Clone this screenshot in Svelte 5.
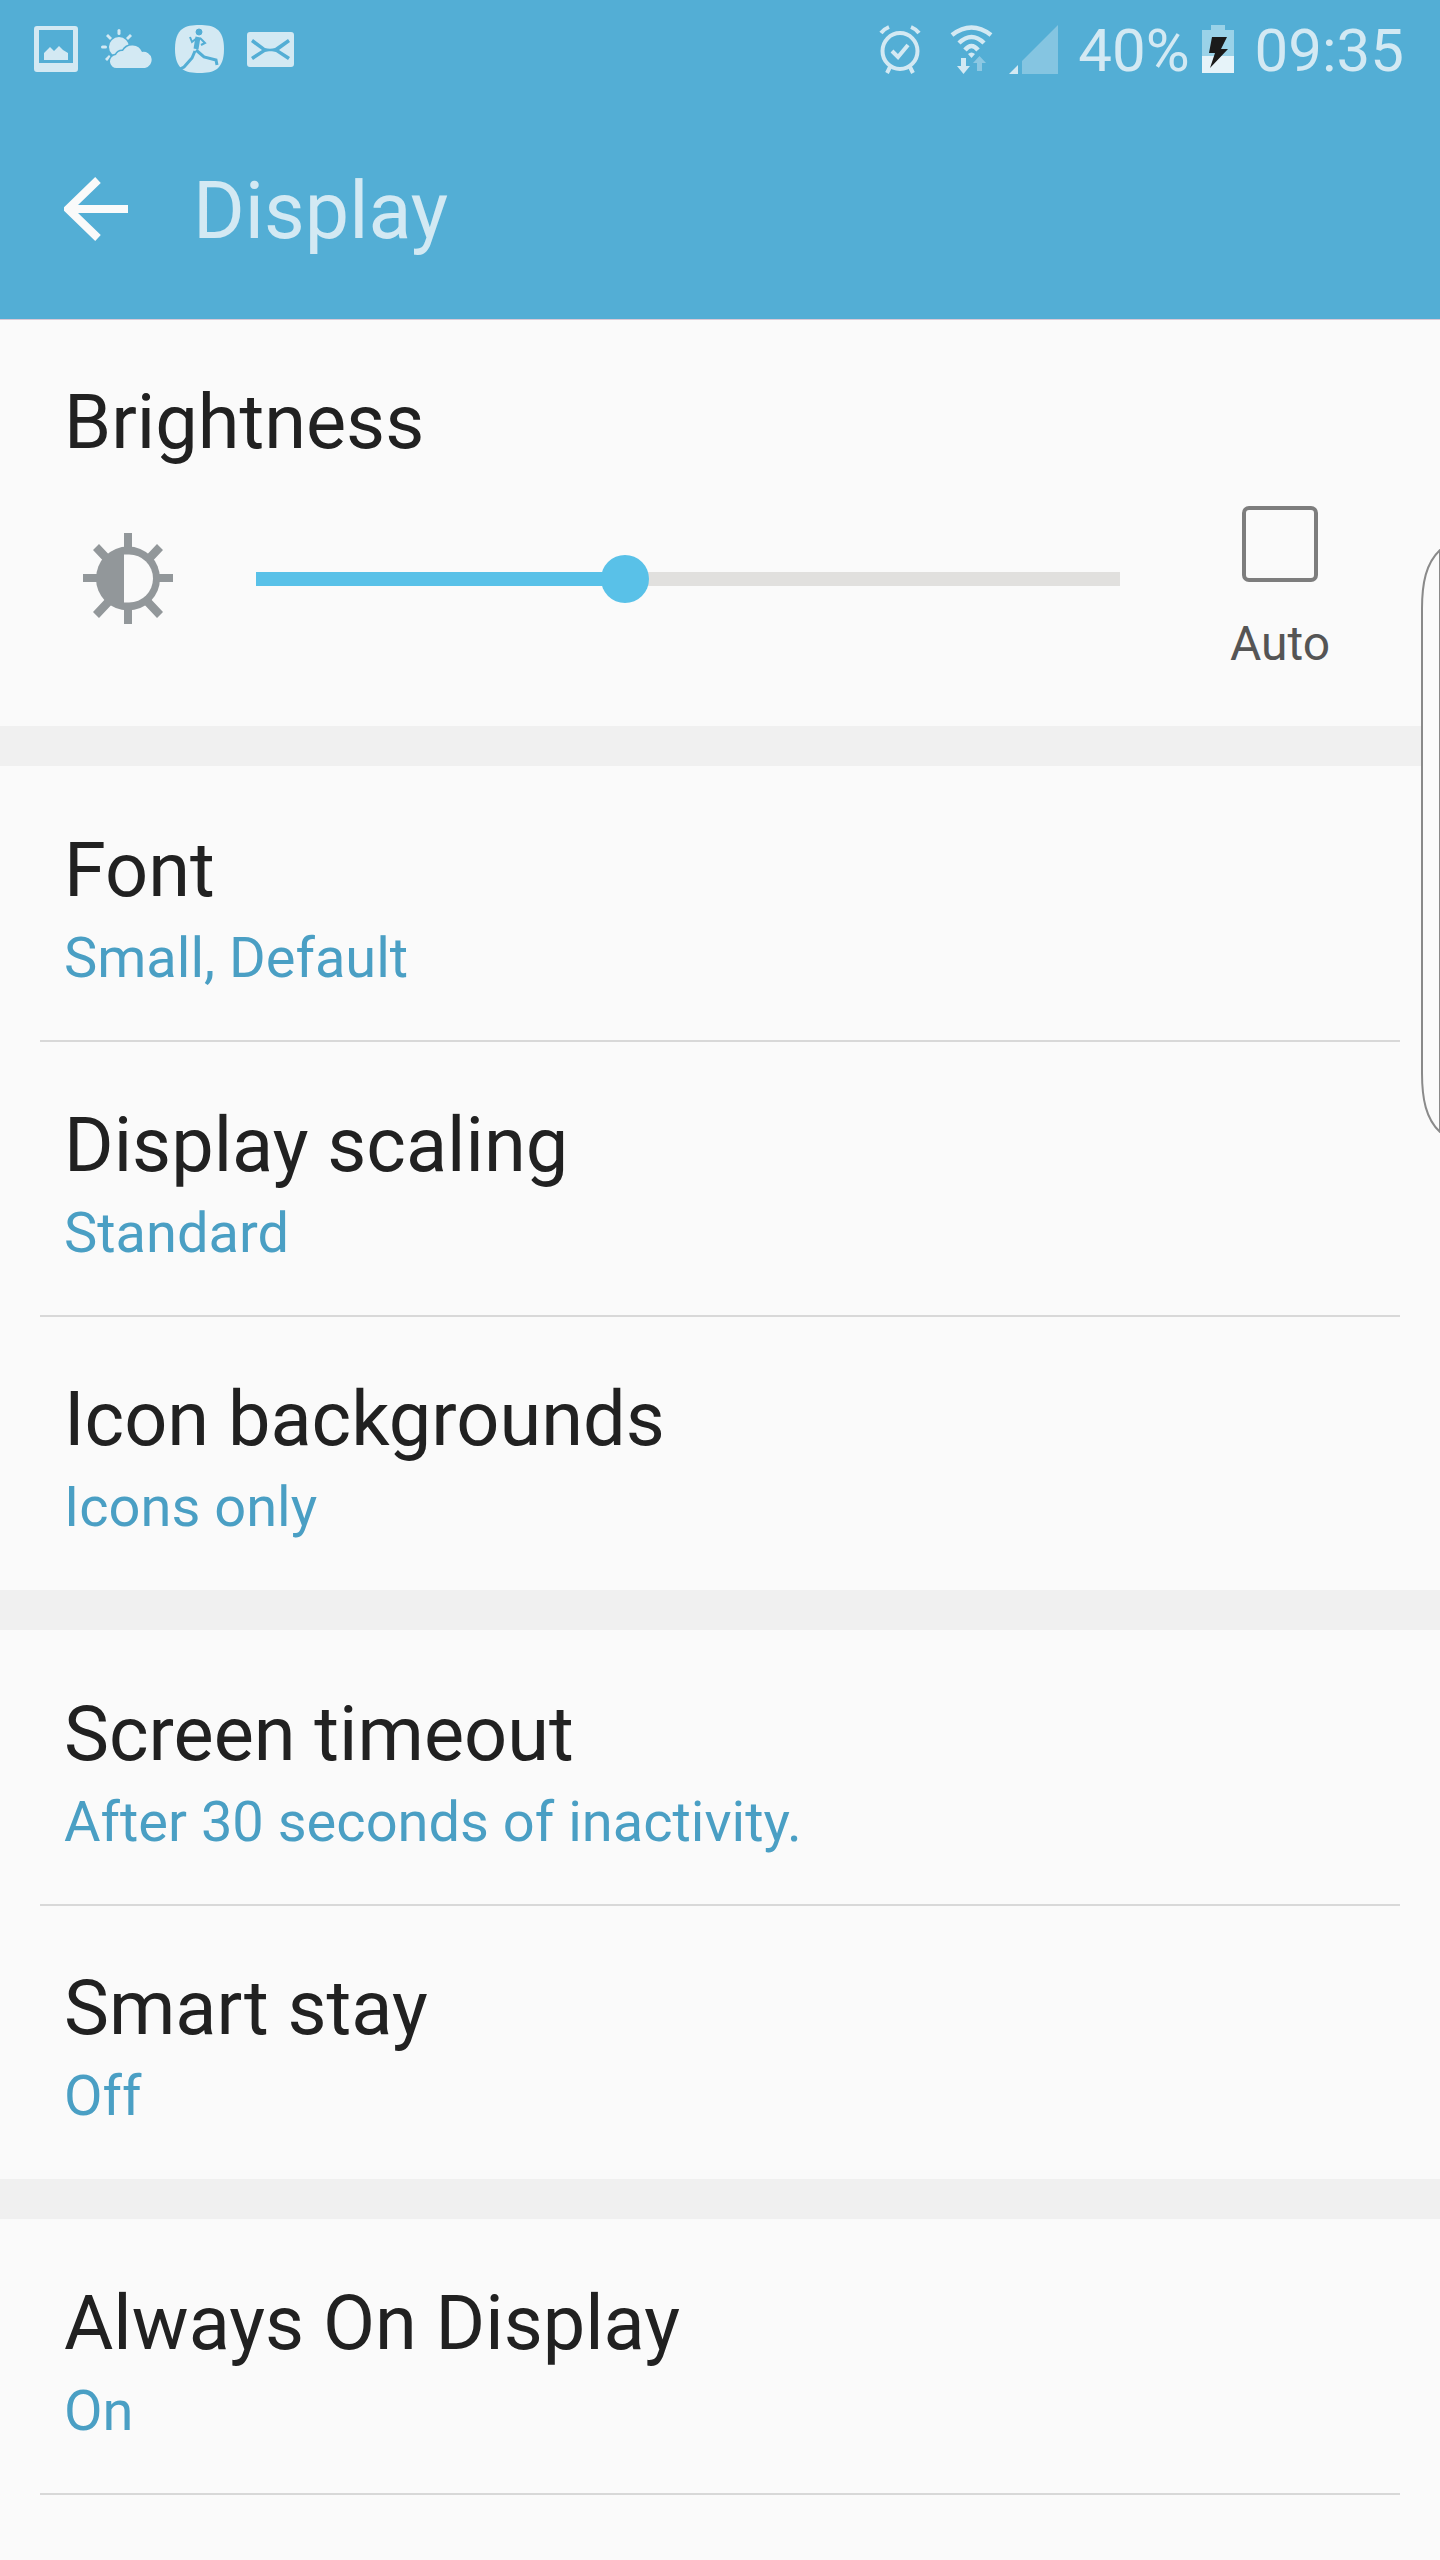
<script>
  const brightness = 42.7;

  const groups = [
    [
      { title: 'Font', sub: 'Small, Default' },
      { title: 'Display scaling', sub: 'Standard' },
      { title: 'Icon backgrounds', sub: 'Icons only' }
    ],
    [
      { title: 'Screen timeout', sub: 'After 30 seconds of inactivity.' },
      { title: 'Smart stay', sub: 'Off' }
    ],
    [
      { title: 'Always On Display', sub: 'On' }
    ]
  ];
</script>

<div class="screen">
  <header class="appbar">
    <div class="status">
      <div class="notif">
        <svg width="44" height="46" viewBox="0 0 44 46">
          <path fill-rule="evenodd" d="M3 0h38a3 3 0 0 1 3 3v40a3 3 0 0 1-3 3H3a3 3 0 0 1-3-3V3a3 3 0 0 1 3-3zM5 4v33h34V4z" />
          <path d="M10 34v-7l6-6 4 4 5-5 4 4 5 3v7z" />
        </svg>
        <svg width="51" height="40" viewBox="0 0 51 40">
          <circle cx="18" cy="18" r="10" />
          <rect x="16.500" y="0" width="3" height="6" rx="1.500" />
          <rect x="0" y="16.500" width="6" height="3" rx="1.500" />
          <path d="M5 7l2-2 4 4-2 2zM31 7l-2-2-4 4 2 2zM4 30l4-4 2 2-4 4z" />
          <path class="cloud" d="M16 39a6.500 6.500 0 0 1-1-13 7 7 0 0 1 7-4 10.500 10.500 0 0 1 19 1 8 8 0 0 1 3 16z" />
        </svg>
        <svg width="49" height="48" viewBox="0 0 49 48">
          <path d="M24.500 0c14 0 24.500 3 24.500 24S38.500 48 24.500 48 0 45 0 24 10.500 0 24.500 0z" />
          <g class="runner">
            <circle cx="24" cy="7" r="3" />
            <path d="M23 12l-2 12" stroke-width="5" />
            <path d="M21 25l8 7 12 3 1 5M20 26l-3 7-8 9-4 2" stroke-width="3" />
            <path d="M22 13l-5 4-2-5M25 13l5 5-4 2" stroke-width="2" />
          </g>
        </svg>
        <svg width="47" height="35" viewBox="0 0 47 35">
          <path fill-rule="evenodd" d="M3 0h41a3 3 0 0 1 3 3v29a3 3 0 0 1-3 3H3a3 3 0 0 1-3-3V3a3 3 0 0 1 3-3zM6 7l-2 3 11 8-11 7 2 3 12-8c3-1 8-1 11 0l12 8 2-3-11-7 11-8-2-3-13 9c-3 1-7 1-10 0z" />
        </svg>
      </div>
      <div class="system">
        <svg class="alarm" width="42" height="49" viewBox="0 0 42 49">
          <ellipse cx="21" cy="26" rx="17.500" ry="18" fill="none" stroke-width="4" />
          <path d="M13 26l6 6 10-12" fill="none" stroke-width="4" />
          <path d="M2 8q3-4 8-6M40 8q-3-4-8-6M11 42l-3 6M31 42l3 6" fill="none" stroke-width="4" />
        </svg>
        <svg class="wifi" width="43" height="49" viewBox="0 0 43 49">
          <path d="M2 10Q21.500-5 41 10M9 18Q21.500 6 34 18M15 25Q21.500 17 28 25" fill="none" stroke-width="4.500" />
          <path d="M21.500 33L18 29q3.500-3 7 0z" />
          <path d="M11 33h5v8h4l-6.500 8L7 41h4z" />
          <path d="M29.500 31l6.500 7h-4v8h-5v-8h-4z" opacity=".45" />
        </svg>
        <svg class="signal" width="49" height="49" viewBox="0 0 49 49">
          <path d="M0 49l9-9v9z" />
          <path d="M13 36L49 0v49H13z" opacity=".4" />
        </svg>
        <span class="pct">40%</span>
        <svg class="battery" width="32" height="48" viewBox="0 0 32 48">
          <path d="M9 0h14v5h9v26H0V5h9z" fill="#9ad2e8" />
          <path d="M0 31h32v17H0z" fill="#e6f3f9" />
          <path d="M10 12h15l-6 12h7L8 43l5-15H7z" fill="#1a1a1a" />
        </svg>
        <span class="clock">09:35</span>
      </div>
    </div>
    <div class="toolbar">
      <svg class="back" width="64" height="64" viewBox="0 0 64 64">
        <path d="M64 32H4M34 3L4 32l30 29" fill="none" stroke="#fafafa" stroke-width="8" />
      </svg>
      <h1>Display</h1>
    </div>
  </header>

  <section class="brightness">
    <div class="title">Brightness</div>
    <div class="controls">
      <svg class="sun" width="90" height="91" viewBox="0 0 90 91">
        <path d="M41 0h8v91h-8zM0 41h90v8H0z" fill="#92979a" />
        <path d="M10 17l6-6 64 68-6 6zM80 17l-6-6-64 68 6 6z" fill="#92979a" />
        <circle cx="45" cy="45.500" r="32" fill="#92979a" />
        <path d="M41 21.500h5a24 24 0 0 1 0 48h-5z" fill="#fafafa" />
      </svg>
      <div class="slider">
        <div class="fill" style="width: {brightness}%"></div>
        <div class="thumb" style="left: {brightness}%"></div>
      </div>
      <div class="auto">
        <div class="check"></div>
        <span>Auto</span>
      </div>
    </div>
  </section>

  {#each groups as group}
    <section class="group">
      {#each group as row, i}
        <div class="row" class:ruled={i < group.length - 1 || group.length === 1}>
          <div class="title">{row.title}</div>
          <div class="sub">{row.sub}</div>
        </div>
      {/each}
    </section>
  {/each}

  <svg class="edge" width="20" height="584" viewBox="0 0 20 584">
    <path d="M20 1C6 14 2 34 2 60v464c0 26 4 46 18 59z" fill="#fbfbfb" stroke="#8a8a8a" stroke-width="2" />
  </svg>
</div>

<style>
  :global(body) {
    background: #fafafa;
  }

  .screen {
    position: relative;
    width: 1440px;
    height: 2560px;
    overflow: hidden;
    background: #fafafa;
    font-family: Roboto, sans-serif;
    color: #212121;
  }

  .appbar {
    height: 320px;
    box-sizing: border-box;
    background: #53aed5;
    color: #d3e9f3;
    border-bottom: 1px solid #d9c9d6;
  }

  .status {
    height: 98px;
    display: flex;
    justify-content: space-between;
    align-items: center;
    padding: 0 36px 0 34px;
  }

  .status svg {
    fill: #d3e9f3;
    flex: none;
  }

  .status .alarm,
  .status .wifi {
    stroke: #d3e9f3;
    stroke-width: 0;
  }

  .cloud {
    stroke: #53aed5;
    stroke-width: 3;
    paint-order: stroke;
  }

  .runner {
    fill: #53aed5;
    stroke: #53aed5;
  }

  .runner path {
    fill: none;
  }

  .notif,
  .system {
    display: flex;
    align-items: center;
  }

  .notif {
    gap: 23px;
  }

  .alarm {
    margin-right: 29px;
  }

  .wifi {
    margin-right: 16px;
  }

  .pct,
  .clock {
    font-size: 60px;
    line-height: 60px;
    padding-top: 3px;
  }

  .pct {
    margin: 0 12px 0 20px;
  }

  .clock {
    margin-left: 21px;
  }

  .toolbar {
    height: 221px;
    display: flex;
    align-items: center;
    padding-left: 64px;
  }

  .back {
    flex: none;
    margin-right: 65px;
  }

  h1 {
    margin: 5px 0 0;
    font-size: 79px;
    font-weight: 400;
  }

  .brightness {
    height: 406px;
    box-sizing: border-box;
    padding: 57px 0 0 64px;
  }

  .title {
    font-size: 75.700px;
    line-height: 90px;
  }

  .controls {
    display: flex;
    margin-top: 66px;
    margin-left: 19px;
  }

  .sun {
    flex: none;
  }

  .slider {
    position: relative;
    width: 864px;
    height: 14px;
    margin: 39px 0 0 83px;
    background: #e1e0de;
  }

  .fill {
    height: 100%;
    background: #59c1e8;
  }

  .thumb {
    position: absolute;
    top: -17px;
    width: 48px;
    height: 48px;
    margin-left: -24px;
    border-radius: 50%;
    background: #59c1e8;
  }

  .auto {
    width: 100px;
    margin: -27px 0 0 110px;
    display: flex;
    flex-direction: column;
    align-items: center;
    color: #555;
    font-size: 48px;
    line-height: 56px;
  }

  .check {
    width: 76px;
    height: 76px;
    flex: none;
    box-sizing: border-box;
    border: 4px solid #7d7d7d;
    border-radius: 7px;
    margin-bottom: 34px;
  }

  .group {
    border-top: 40px solid #f0f0f0;
  }

  .row {
    position: relative;
    height: 274.500px;
    box-sizing: border-box;
    padding: 59px 0 0 64px;
  }

  .ruled::after {
    content: '';
    position: absolute;
    left: 40px;
    right: 40px;
    bottom: -1.500px;
    height: 2px;
    background: #d8d8d8;
  }

  .sub {
    font-size: 56px;
    line-height: 66px;
    margin-top: 10px;
    color: #4a9fc4;
  }

  .edge {
    position: absolute;
    right: 0;
    top: 549px;
  }
</style>
